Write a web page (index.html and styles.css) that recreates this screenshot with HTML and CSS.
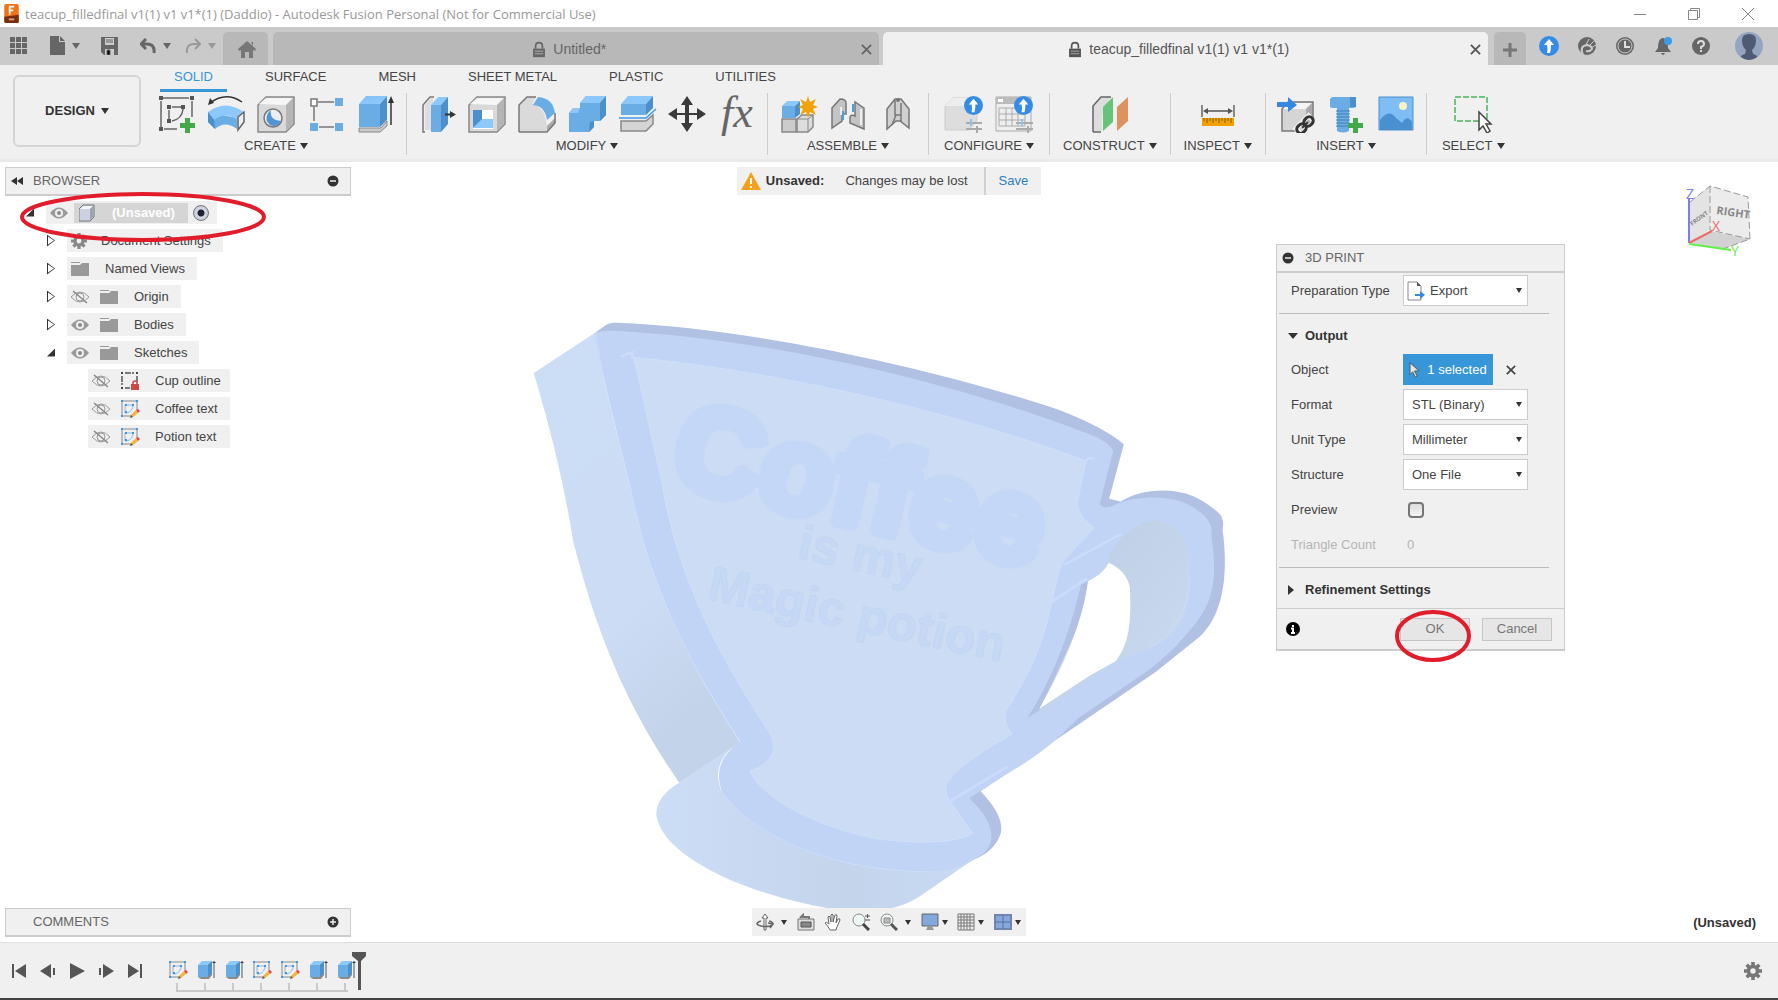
FILE: index.html
```html
<!DOCTYPE html>
<html lang="en">
<head>
    <meta charset="UTF-8">
    <meta name="viewport" content="width=device-width, initial-scale=1.0">
    <title>teacup_filledfinal v1(1) v1 v1*(1) (Daddio) - Autodesk Fusion Personal</title>
    <link rel="stylesheet" href="styles.css">
</head>
<body>
    <!-- Shared icons -->
    <svg class="sprite" width="0" height="0" aria-hidden="true">
        <defs>
            <linearGradient id="blueTop" x1="0" y1="0" x2="1" y2="1">
                <stop offset="0" stop-color="#7fc0f7"/><stop offset="1" stop-color="#93cbfb"/>
            </linearGradient>
            <symbol id="eye" viewBox="0 0 20 16">
                <path d="M1 8Q10-3 19 8Q10 19 1 8Z" fill="#9a9a9a"/>
                <circle cx="10" cy="8" r="4" fill="#efefef"/><circle cx="10" cy="8" r="2" fill="#8a8a8a"/>
            </symbol>
            <symbol id="eye-off" viewBox="0 0 20 16">
                <path d="M1 8Q10-2 19 8Q10 18 1 8Z" fill="none" stroke="#999"/>
                <circle cx="10" cy="8" r="4" fill="none" stroke="#999"/>
                <path d="M3 2l14 12" stroke="#888" stroke-width="1.5"/>
            </symbol>
            <symbol id="folder" viewBox="0 0 20 16">
                <path d="M1 1h9v1h-9zM1 4h9l2-2h7v13H1z" fill="#999"/>
            </symbol>
            <symbol id="gear" viewBox="0 0 20 20">
                <circle cx="10" cy="10" r="5" fill="none" stroke="currentColor" stroke-width="4"/>
                <path d="M10 0v4M10 16v4M0 10h4M16 10h4M3 3l3 3M14 14l3 3M17 3l-3 3M3 17l3-3" stroke="currentColor" stroke-width="4"/>
            </symbol>
            <symbol id="sketch-edit" viewBox="0 0 20 20">
                <path d="M2 2h15v9M2 2v15h9" fill="none" stroke="#aaa" stroke-width="1.5"/>
                <path d="M5 6h8q0 6-6 8h-2z" fill="none" stroke="#8fb6d8"/>
                <path d="M1 1h2v2H1zM16 1h2v2h-2zM1 16h2v2H1zM5 5h2v2H5zM12 5h2v2h-2zM5 12h2v2H5z" fill="#3d97e8"/>
                <path d="M11 16l5-5 2 3-5 4h-2z" fill="#f3b63b"/><path d="M16 11l2-1 2 2-2 2z" fill="#e2464b"/>
                <path d="M10 19l1-3 2 2z" fill="#555"/>
            </symbol>
            <symbol id="sketch-lock" viewBox="0 0 20 20">
                <path d="M5 2h9M2 5v9M17 5v6M5 17h5" stroke="#555" stroke-width="1.5" stroke-dasharray="6 1"/>
                <path d="M1 1h2v2H1zM16 1h2v2h-2zM1 16h2v2H1z" fill="#444"/>
                <path d="M11 13h8v6h-8z" fill="#c9474b"/><path d="M13 13v-2q2-2 4 0v2" fill="none" stroke="#c9474b" stroke-width="1.5"/>
            </symbol>
            <symbol id="extrude-small" viewBox="0 0 20 20">
                <path d="M2 17l3 2h8l3-4V3h-4L2 6z" fill="#8b8b8b"/>
                <path d="M2 5h10v12H2z" fill="#6aade5"/><path d="M2 5l4-4h10l-4 4z" fill="#8cc8fa"/>
                <path d="M12 5l4-4v12l-4 4z" fill="#4b8fcb"/><path d="M18 18V3" stroke="#555"/><path d="M16 3l2-2 2 2z" fill="#333"/>
            </symbol>
            <symbol id="up-badge" viewBox="0 0 20 20">
                <circle cx="10" cy="10" r="10" fill="#348ce6"/>
                <path d="M10 3l5 6h-3q0 5-1 8h-3q1-4 0-8H5z" fill="#fff"/>
            </symbol>
            <symbol id="minus-dot" viewBox="0 0 12 12"><circle cx="6" cy="6" r="5.5" fill="#333"/><path d="M3 6h6" stroke="#eee" stroke-width="1.5"/></symbol>
            <symbol id="plus-dot" viewBox="0 0 12 12"><circle cx="6" cy="6" r="5.5" fill="#333"/><path d="M3 6h6M6 3v6" stroke="#eee" stroke-width="1.5"/></symbol>
            <symbol id="cursor" viewBox="0 0 12 18"><path d="M1 1v13l3-3 3 6 2-1-3-6h5z" fill="#e8e8e8" stroke="#555"/></symbol>
            <symbol id="lock" viewBox="0 0 16 20">
                <path d="M1 9h14v10H1z" fill="currentColor"/><path d="M4 9V6q0-4 4-4t4 4v3" fill="none" stroke="currentColor" stroke-width="2"/>
                <path d="M3 12h10M3 15h10" stroke="#eee" stroke-opacity=".6"/>
            </symbol>
            <symbol id="close" viewBox="0 0 12 12"><path d="M1 1l10 10M11 1L1 11" stroke="currentColor" stroke-width="2"/></symbol>
        </defs>
    </svg>

    <header class="titlebar">
        <svg class="app-logo" viewBox="0 0 16 21">
            <path d="M0 2Q0 0 2 0h12q2 0 2 2v18q0 1-2 1H2q-2 0-2-2z" fill="#f47216"/>
            <path d="M0 14l16-2v8q0 1-2 1H2q-2 0-2-2z" fill="#7a2f0b"/>
            <path d="M6 12V3h5M6 7h4" fill="none" stroke="#fff" stroke-width="2"/>
            <path d="M5 17h6" stroke="#d8a88c" stroke-width="2"/>
        </svg>
        <h1>teacup_filledfinal v1(1) v1 v1*(1) (Daddio) - Autodesk Fusion Personal (Not for Commercial Use)</h1>
        <div class="window-buttons">
            <button aria-label="Minimize"><svg viewBox="0 0 12 12"><path d="M0 6.5h12"/></svg></button>
            <button aria-label="Restore"><svg viewBox="0 0 12 12"><path d="M.5 2.500h9v9h-9zM2.500 2V.5h9v9H10"/></svg></button>
            <button aria-label="Close"><svg viewBox="0 0 12 12"><path d="M0 0l12 12M12 0L0 12"/></svg></button>
        </div>
    </header>

    <nav class="tabbar">
        <div class="quick">
            <button aria-label="Data panel"><svg width="18" height="18" viewBox="0 0 18 18"><path d="M0 0h5v5H0zM6 0h5v5H6zM12 0h5v5h-5zM0 6h5v5H0zM6 6h5v5H6zM12 6h5v5h-5zM0 12h5v5H0zM6 12h5v5H6zM12 12h5v5h-5z" fill="#666"/></svg></button>
            <button class="caret" aria-label="File"><svg width="15" height="20" viewBox="0 0 15 20"><path d="M0 0h9v6h6v13H0zM10 0l5 5h-5z" fill="#666"/></svg></button>
            <button aria-label="Save"><svg width="18" height="18" viewBox="0 0 18 18"><path d="M0 0h17v18H3l-3-3z" fill="#666"/><path d="M4 1h9v7H4zM4 12h9v6H4z" fill="#ccc"/><path d="M5 3h7M5 5h7M6 13h3v5H6z" stroke="#666"/></svg></button>
            <button class="caret" aria-label="Undo"><svg width="16" height="16" viewBox="0 0 16 16"><path d="M6 1L1 6l5 5M1 6h6q8 0 7 9" fill="none" stroke="#666" stroke-width="3"/></svg></button>
            <button class="caret dim" aria-label="Redo"><svg width="16" height="16" viewBox="0 0 16 16"><path d="M10 1l5 5-5 5M15 6H9Q1 6 2 15" fill="none" stroke="#999" stroke-width="2"/></svg></button>
        </div>
        <button class="tab tab-home" aria-label="Home"><svg width="18" height="17" viewBox="0 0 18 17"><path d="M9 0l9 8-1 2-2-1v8h-4v-6H7v6H3V9l-2 1-1-2zM13 1h2v4z" fill="#777"/></svg></button>
        <div class="tab tab-doc">
            <span class="tab-label"><svg width="14" height="17"><use href="#lock"/></svg>Untitled*</span>
            <button aria-label="Close tab"><svg width="11" height="11"><use href="#close"/></svg></button>
        </div>
        <div class="tab tab-doc tab-active">
            <span class="tab-label"><svg width="14" height="17"><use href="#lock"/></svg>teacup_filledfinal v1(1) v1 v1*(1)</span>
            <button aria-label="Close tab"><svg width="11" height="11"><use href="#close"/></svg></button>
        </div>
        <button class="tab tab-add" aria-label="New tab"><svg width="16" height="16" viewBox="0 0 16 16"><path d="M8 1v14M1 8h14" stroke="#777" stroke-width="3"/></svg></button>
        <div class="account">
            <button aria-label="Update"><svg width="20" height="20"><use href="#up-badge"/></svg></button>
            <button aria-label="Extensions"><svg width="20" height="20" viewBox="0 0 20 20"><circle cx="10" cy="10" r="9" fill="#666"/><path d="M6 19q-4-9 4-10 5 1 5 4-2 3-6 2" fill="none" stroke="#ccc" stroke-width="2"/><path d="M9 9l3-6M12 10l5-5M14 12l5-3" stroke="#ccc"/></svg></button>
            <button aria-label="Job status"><svg width="20" height="20" viewBox="0 0 20 20"><circle cx="10" cy="10" r="9" fill="#666"/><circle cx="10" cy="10" r="7" fill="none" stroke="#ccc"/><path d="M10 5v6h5" fill="none" stroke="#ddd" stroke-width="2"/></svg></button>
            <button aria-label="Notifications"><svg width="20" height="20" viewBox="0 0 20 20"><path d="M2 16l3-4q0-10 5-10t5 10l3 4zM8 17h4q-2 4-4 0z" fill="#666"/><circle cx="15" cy="5" r="4" fill="#3a9be8"/></svg></button>
            <button aria-label="Help"><svg width="20" height="20" viewBox="0 0 20 20"><circle cx="10" cy="10" r="9" fill="#666"/><path d="M7 8q0-3 3-3t3 3q0 2-3 3v2M10 14v2" fill="none" stroke="#ddd" stroke-width="2"/></svg></button>
            <button class="avatar" aria-label="Account"><svg width="28" height="28" viewBox="0 0 28 28"><circle cx="14" cy="14" r="14" fill="#94a5c2"/><path d="M7 8q0-6 7-6t7 6q0 7-4 10l1 4q4 1 4 3-4 3-8 3t-8-3q0-2 4-3l1-4Q7 15 7 8z" fill="#4e5b72"/></svg></button>
        </div>
    </nav>

    <section class="ribbon">
        <button class="workspace">DESIGN</button>
        <div class="ribbon-main">
            <div class="ribbon-tabs">
                <button class="selected">SOLID</button>
                <button>SURFACE</button>
                <button>MESH</button>
                <button>SHEET METAL</button>
                <button>PLASTIC</button>
                <button>UTILITIES</button>
            </div>
            <div class="groups">
                <div class="group">
                    <div class="tools">
                        <button aria-label="Create sketch"><svg viewBox="0 0 40 40"><path d="M7 5h26M5 8v26M36 8v16M8 36h13" stroke="#666" stroke-width="1.500" fill="none"/><path d="M3 3h4v4H3zM34 3h4v4h-4zM3 34h4v4H3zM11 12h4v4h-4zM25 12h4v4h-4zM11 26h4v4h-4z" fill="#555"/><path d="M16 14h9M13 17v9M27 16q-1 10-11 12" fill="none" stroke="#666" stroke-width="1.500"/><path d="M29 25h5v5h5v5h-5v5h-5v-5h-5v-5h5z" fill="#43a84a"/></svg></button>
                        <button aria-label="Revolve"><svg viewBox="0 0 40 40"><path d="M4 10Q20-2 36 9" fill="none" stroke="#333" stroke-width="1.500"/><path d="M2 12l2-7 4 5z" fill="#333"/><path d="M2 19v10l7 7q10-9 22 0V25z" fill="#6aade5"/><path d="M2 19q17-13 36 0l-7 8q-11-9-23 0z" fill="#8cc8fa"/><path d="M2 19l6 8 1 9-7-7z" fill="#4b8fcb"/><path d="M32 24l6-5v10l-6 8z" fill="#eee" stroke="#666" stroke-width="1.500"/></svg></button>
                        <button aria-label="Hole"><svg viewBox="0 0 40 40"><path d="M2 12l8-8h28v27l-8 8H2z" fill="#d9d9d9" stroke="#888" stroke-width="1.500"/><path d="M3 11l7-6h27l-7 7z" fill="#f5f5f5"/><path d="M30 12l7-7v26l-7 7z" fill="#b5b5b5"/><circle cx="17" cy="25" r="9" fill="#eee" stroke="#777" stroke-width="1.500"/><path d="M15 17q-2 10 10 11-4 7-11 4-6-5-2-12z" fill="#4f94d4"/></svg></button>
                        <button aria-label="Pattern"><svg viewBox="0 0 40 40"><path d="M12 9h16M8 14v14M13 34h15" stroke="#777" stroke-width="1.500"/><path d="M5 6h6v7H5z" fill="#fff" stroke="#777" stroke-width="1.500"/><path d="M29 5h8v8h-8zM4 30h8v8H4zM29 30h8v8h-8z" fill="#6aade5"/></svg></button>
                        <button aria-label="Extrude"><svg viewBox="0 0 40 40"><path d="M3 35h22l6-7v5l-7 6H3z" fill="#ccc" stroke="#888"/><path d="M3 11h21v23H3z" fill="#6aade5"/><path d="M3 11l7-8h21l-7 8z" fill="url(#blueTop)"/><path d="M24 11l7-8v24l-7 7z" fill="#4b8fcb"/><path d="M35 32V8" stroke="#333" stroke-width="1.500"/><path d="M32 10l3-7 3 7z" fill="#333"/></svg></button>
                    </div>
                    <span class="group-label">CREATE</span>
                </div>
                <div class="group">
                    <div class="tools">
                        <button aria-label="Press pull"><svg viewBox="0 0 40 40"><path d="M8 39H6V12l7-8h4" fill="none" stroke="#777" stroke-width="1.500"/><path d="M8 12l6-7h2v32H8z" fill="#ddd"/><path d="M14 12h10v27H14z" fill="#6aade5"/><path d="M14 12l7-8h10l-7 8z" fill="#8cc8fa"/><path d="M24 12l7-8v27l-7 8z" fill="#4b8fcb"/><path d="M28 21.500h7" stroke="#333" stroke-width="2"/><path d="M33 18l6 3.500-6 3.500z" fill="#333"/></svg></button>
                        <button aria-label="Shell"><svg viewBox="0 0 40 40"><path d="M2 12l8-8h28v27l-8 8H2z" fill="#d9d9d9" stroke="#888" stroke-width="1.500"/><path d="M3 11l7-6h27l-7 7z" fill="#f5f5f5"/><path d="M30 12l7-7v26l-7 7z" fill="#b5b5b5"/><path d="M6 17h20v19H6z" fill="#fff"/><path d="M6 17h9v10l-9 8z" fill="#4b8fcb"/><path d="M6 35l9-9h11v9z" fill="#8cc8fa"/></svg></button>
                        <button aria-label="Fillet"><svg viewBox="0 0 40 40"><path d="M2 39V12l8-8h9l-4 7q15 3 15 28z" fill="#dadada"/><path d="M30 33l8-8v5l-8 9z" fill="#aaa"/><path d="M2 39V12l8-8h9M2 39h28l8-9v-10" fill="none" stroke="#777" stroke-width="1.500"/><path d="M16 12l5-8q15 1 17 16l-8 7q-2-14-14-15z" fill="#6aade5"/></svg></button>
                        <button aria-label="Combine"><svg viewBox="0 0 40 40"><path d="M2 20l4-5h7V10l6-7h20v19l-6 6h-6v6l-5 5H2z" fill="#6aade5"/><path d="M2 20l4-5h7l-2 5zM13 10l6-7h20l-6 7z" fill="#8cc8fa"/><path d="M33 10l6-7v19l-6 6zM23 29l4-1v6l-5 5z" fill="#4b8fcb"/></svg></button>
                        <button aria-label="Split body"><svg viewBox="0 0 40 40"><path d="M4 11h25v11H4z" fill="#6aade5"/><path d="M4 11l7-8h25l-7 8z" fill="#8cc8fa"/><path d="M29 11l7-8v12l-7 7z" fill="#4b8fcb"/><path d="M2 25h27l10-9" fill="none" stroke="#3d97e8" stroke-width="1.500"/><path d="M4 28h25l7-6v9l-7 7H4z" fill="#d5d5d5" stroke="#888" stroke-width="1.500"/></svg></button>
                        <button aria-label="Move"><svg viewBox="0 0 40 40"><path d="M20 3l6 9h-4v8h8v-5l9 6-9 6v-5h-8v8h4l-6 9-6-9h4v-8h-8v5l-9-6 9-6v5h8v-8h-4z" fill="#3a3a3a"/></svg></button>
                        <button class="fx">fx</button>
                    </div>
                    <span class="group-label">MODIFY</span>
                </div>
                <div class="group">
                    <div class="tools">
                        <button aria-label="New component"><svg viewBox="0 0 40 40"><path d="M4 26h14v13H4z" fill="#ccc" stroke="#888" stroke-width="1.500"/><path d="M19 26l5-4h11v12l-5 5H19z" fill="#ddd" stroke="#888" stroke-width="1.500"/><path d="M19 26h11v13M30 26l5-4" fill="none" stroke="#888"/><path d="M4 13h13v12H4z" fill="#6aade5"/><path d="M4 13l5-5h13l-5 5z" fill="#8cc8fa"/><path d="M17 13l5-5v13l-5 4z" fill="#4b8fcb"/><path d="M30 3l2 6 6-3-3 6 5 2-5 2 3 6-6-3-2 6-2-6-6 3 3-6-5-2 5-2-3-6 6 3z" fill="#f0a30a"/></svg></button>
                        <button aria-label="Joint"><svg viewBox="0 0 40 40"><path d="M4 15l8-9q6 0 6 4v11h-4v7L4 35zM36 15l-9-6v14q-4-2-5 1v6l14 6z" fill="#c4c4c4" stroke="#777" stroke-width="1.500"/><path d="M15 18v9M25 11v8" stroke="#4a9fe8" stroke-width="2"/><path d="M13 14v8M33 16v16" stroke="#eee" stroke-width="2"/></svg></button>
                        <button aria-label="As-built joint"><svg viewBox="0 0 40 40"><path d="M9 16l8-10h6l8 10v19l-9-7h-4l-9 8z" fill="#d0d0d0" stroke="#777" stroke-width="1.500"/><path d="M17 7v15h6V10M18 22l-4 10M23 21v8" fill="none" stroke="#777" stroke-width="1.500"/><circle cx="20" cy="7" r="2" fill="#777"/></svg></button>
                    </div>
                    <span class="group-label">ASSEMBLE</span>
                </div>
                <div class="group group-wide">
                    <div class="tools">
                        <button aria-label="Configure model"><svg viewBox="0 0 40 40"><path d="M1 13l8-8h24v22l-8 10H1z" fill="#ddd" stroke="#ccc"/><path d="M1 13l8-8h24l-8 8z" fill="#eee"/><path d="M22 30h16M22 36h16" stroke="#aaa" stroke-width="2"/><path d="M27 26v7" stroke="#8ec5ee" stroke-width="2"/><path d="M33 33v7" stroke="#aaa" stroke-width="2"/><use href="#up-badge" x="20" y="3" width="19" height="19"/></svg></button>
                        <button aria-label="Configuration table"><svg viewBox="0 0 40 40"><path d="M2 4h35v34H2z" fill="#eee" stroke="#aaa"/><path d="M2 4h35v7H2z" fill="#bbb"/><path d="M4 6h5v3H4z" fill="#fff"/><path d="M5 15h26v18H5zM5 21h26M5 27h26M12 15v18M18 15v18M24 15v18" fill="none" stroke="#aaa"/><path d="M22 30h17M22 36h17" stroke="#aaa" stroke-width="2"/><path d="M28 26v7" stroke="#8ec5ee" stroke-width="2"/><path d="M34 33v7" stroke="#aaa" stroke-width="2"/><use href="#up-badge" x="20" y="3" width="19" height="19"/></svg></button>
                    </div>
                    <span class="group-label">CONFIGURE</span>
                </div>
                <div class="group group-slim">
                    <div class="tools">
                        <button aria-label="Offset plane"><svg viewBox="0 0 40 40"><path d="M3 39V13l8-9h10" fill="#ddd" stroke="#666" stroke-width="1.500"/><path d="M4 14l8-9h8l-8 9v24H4z" fill="#ddd"/><path d="M3 39h8" stroke="#666" stroke-width="1.500"/><path d="M13 14l10-10v25L13 38z" fill="#66c47a"/><path d="M27 14L38 4v24L27 38z" fill="#de935f"/></svg></button>
                    </div>
                    <span class="group-label">CONSTRUCT</span>
                </div>
                <div class="group group-slim">
                    <div class="tools">
                        <button aria-label="Measure"><svg viewBox="0 0 40 40"><path d="M4 12v12M36 12v12" stroke="#666" stroke-width="1.500"/><path d="M8 18h24" stroke="#555" stroke-width="1.500"/><path d="M5 18l5-3v6zM35 18l-5-3v6z" fill="#555"/><path d="M4 25h32v8H4z" fill="#f2a100"/><path d="M6 25v3M9 25v5M12 25v3M15 25v5M18 25v3M21 25v5M24 25v3M27 25v5M30 25v3M33 25v5" stroke="#8a5a00"/></svg></button>
                    </div>
                    <span class="group-label">INSPECT</span>
                </div>
                <div class="group">
                    <div class="tools">
                        <button aria-label="Insert derive"><svg viewBox="0 0 40 40"><path d="M6 16l6-7h25v21l-7 8H6z" fill="#d5d5d5" stroke="#777" stroke-width="1.500"/><path d="M7 16l6-6h23l-6 6z" fill="#f4f4f4"/><path d="M30 16l6-6v20l-6 7z" fill="#aaa"/><path d="M1 9h11V4l9 8-9 7v-5H1z" fill="#3589e0"/><g transform="rotate(-45 29 32)" fill="none"><path d="M20 28h9v8h-9zM29 28h9v8h-9z" stroke="#f0f0f0" stroke-width="5"/><rect x="19" y="28" width="10" height="8" rx="4" stroke="#333" stroke-width="3"/><rect x="29" y="28" width="10" height="8" rx="4" stroke="#333" stroke-width="3"/><path d="M25 32h8" stroke="#333" stroke-width="2"/></g></svg></button>
                        <button aria-label="Insert fastener"><svg viewBox="0 0 40 40"><path d="M4 6l2-2h22l2 2v8l-2 1H6l-2-1z" fill="#6aade5"/><path d="M24 4h6v10h-6z" fill="#4b8fcb"/><path d="M11 15h12v23q-6 3-12 0z" fill="#6aade5"/><path d="M10 18h14M10 21h14M10 24h14M10 27h14M10 30h14M10 33h14" stroke="#3f7fb8"/><path d="M27 25h5v5h5v5h-5v5h-5v-5h-5v-5h5z" fill="#43a84a"/></svg></button>
                        <button aria-label="Insert image"><svg viewBox="0 0 40 40"><path d="M3 4h34v33H3z" fill="#7ebef5" stroke="#4b8fcb"/><path d="M4 27q9-12 16-2l6 5q5-9 10-1v8H4z" fill="#4a8fd0"/><circle cx="27" cy="13" r="4" fill="#fbf3c0"/></svg></button>
                    </div>
                    <span class="group-label">INSERT</span>
                </div>
                <div class="group group-wide">
                    <div class="tools">
                        <button aria-label="Select"><svg viewBox="0 0 40 40"><path d="M2 4h32v24H2z" fill="none" stroke="#4bb25a" stroke-width="1.500" stroke-dasharray="6 2"/><path d="M26 19v18l4-4 4 7 3-2-4-7h5z" fill="#fff" stroke="#444" stroke-width="1.500"/></svg></button>
                    </div>
                    <span class="group-label">SELECT</span>
                </div>
            </div>
        </div>
    </section>

    <main class="viewport">
        <!-- Model on the canvas -->
        <svg class="model" width="720" height="610" viewBox="0 0 720 610" role="img" aria-label="Teacup body">
            <defs>
                <linearGradient id="side" x1="0" y1="0" x2=".4" y2="1">
                    <stop offset="0" stop-color="#ccddf6"/><stop offset=".7" stop-color="#cbdcf4"/><stop offset="1" stop-color="#c2d3ea"/>
                </linearGradient>
                <linearGradient id="foot" x1="0" y1="0" x2="1" y2="0">
                    <stop offset="0" stop-color="#ccddf6"/><stop offset=".6" stop-color="#c4d4eb"/><stop offset="1" stop-color="#c8daf5"/>
                </linearGradient>
                <linearGradient id="wall" x1="0" y1="0" x2="1" y2="1">
                    <stop offset="0" stop-color="#bccce2"/><stop offset="1" stop-color="#cbdcf3"/>
                </linearGradient>
            </defs>
            <g transform="scale(.4592 .389)">
                <path fill="#b0c1e3" d="M165 57L188 38C194 34 200 33 210 33C500 45 900 150 1170 255Q1270 300 1315 345L1283 485L1308 492C1350 460 1420 455 1465 478Q1490 490 1520 520Q1535 535 1530 565C1542 670 1535 780 1480 840L1385 930L1003 1237Q1055 1300 1047 1345Q1035 1390 990 1412L700 1300L260 500Z"/>
                <path fill="url(#side)" d="M30 162L165 57C185 220 215 330 245 480C285 720 380 930 480 1112L347 1215C220 1000 160 800 115 590Q90 400 30 162Z"/>
                <path fill="url(#foot)" d="M347 1215L480 1110C425 1150 425 1200 440 1240C500 1340 660 1440 880 1444Q940 1442 1000 1402L870 1508Q840 1532 800 1540H680C480 1500 310 1400 297 1300Q295 1250 347 1215Z"/>
                <path fill="#c1d4f5" d="M162 60Q180 52 215 54C600 80 1000 210 1230 315Q1280 335 1292 362L1262 500Q1275 515 1300 498C1350 475 1430 475 1470 510Q1512 540 1506 585C1520 700 1510 760 1450 835Q1420 880 1370 925L1215 1050C1180 1090 1150 1130 1075 1182L978 1255C1030 1310 1045 1370 1000 1405Q950 1445 880 1444C650 1440 500 1340 440 1240Q415 1160 480 1110C380 930 285 720 245 480C215 330 185 200 162 60Z"/>
                <path fill="#cbdcf4" stroke="#d1e0fa" stroke-width="2" d="M248 122C500 150 900 240 1232 388L1213 500Q1220 535 1250 560L1180 650C1150 750 1160 850 1058 1030Q1052 1065 1072 1090L1015 1130C940 1190 915 1220 933 1255L985 1345C950 1373 860 1372 780 1360C650 1330 530 1260 500 1185C550 1165 560 1130 545 1090C440 900 345 700 310 450Z"/>
                <path fill="#b0c1e3" d="M1237 697C1225 820 1175 930 1130 1030L1105 1048C1160 950 1200 820 1222 705Z"/>
                <path fill="url(#wall)" d="M1280 645C1295 590 1350 535 1390 542C1440 550 1465 600 1458 690C1462 780 1430 840 1370 870L1290 905L1190 990L1130 1038L1135 1020Z"/>
                <path fill="#fff" d="M1282 650Q1320 670 1328 712C1332 810 1325 860 1297 903L1240 940L1131 1025C1190 900 1225 800 1237 697Q1270 680 1282 650Z"/>
                <path fill="none" stroke="#cbdcfb" stroke-width="6" d="M1185 655L1310 575M1100 795L1235 690M905 1285L1060 1175M220 120L245 108V125M1232 388Q1240 375 1250 385"/>
                <path fill="none" stroke="#cdddf8" stroke-width="2" d="M165 57C185 220 215 330 245 480C285 720 380 930 480 1112M440 1240C500 1340 660 1440 880 1444M1458 690C1455 780 1420 830 1370 870"/>
            </g>
            <g class="engraving">
                <text class="engrave-big" transform="translate(148 173) rotate(13)">Coffee</text>
                <text class="engrave-small" transform="translate(276 248) rotate(12)">is my</text>
                <text class="engrave-small" transform="translate(186 289) rotate(12)">Magic potion</text>
            </g>
        </svg>

        <aside class="browser">
            <div class="panel-bar">
                <svg class="collapse" width="12" height="8" viewBox="0 0 12 8"><path d="M6 0v8L0 4zM12 0v8L6 4z" fill="#333"/></svg>
                <h2>BROWSER</h2>
                <button aria-label="Collapse browser"><svg width="12" height="12"><use href="#minus-dot"/></svg></button>
            </div>
            <ul class="tree">
                <li class="root"><span class="twist open"></span><div class="node">
                    <svg width="20" height="16"><use href="#eye"/></svg>
                    <span class="root-name"><svg width="16" height="18" viewBox="0 0 16 18"><path d="M0 5l4-4h11v12l-4 4H0z" fill="#ccd2df" stroke="#777"/><path d="M1 5l4-3h9l-3 3z" fill="#f4f6fa"/><path d="M11 5l3-3v11l-3 3z" fill="#9aa3b5"/></svg><b>(Unsaved)</b></span>
                    <input type="radio" name="active" aria-label="Activate component" checked>
                </div></li>
                <li><span class="twist"></span><div class="node node-settings"><svg class="gray" width="16" height="16"><use href="#gear"/></svg><span>Document Settings</span></div></li>
                <li><span class="twist"></span><div class="node"><svg width="20" height="16"><use href="#folder"/></svg><span>Named Views</span></div></li>
                <li><span class="twist"></span><div class="node"><svg width="20" height="16"><use href="#eye-off"/></svg><svg width="20" height="16"><use href="#folder"/></svg><span>Origin</span></div></li>
                <li><span class="twist"></span><div class="node"><svg width="20" height="16"><use href="#eye"/></svg><svg width="20" height="16"><use href="#folder"/></svg><span>Bodies</span></div></li>
                <li><span class="twist open"></span><div class="node"><svg width="20" height="16"><use href="#eye"/></svg><svg width="20" height="16"><use href="#folder"/></svg><span>Sketches</span></div></li>
                <li class="leaf"><div class="node"><svg width="20" height="16"><use href="#eye-off"/></svg><svg width="20" height="20"><use href="#sketch-lock"/></svg><span>Cup outline</span></div></li>
                <li class="leaf"><div class="node"><svg width="20" height="16"><use href="#eye-off"/></svg><svg width="20" height="20"><use href="#sketch-edit"/></svg><span>Coffee text</span></div></li>
                <li class="leaf"><div class="node"><svg width="20" height="16"><use href="#eye-off"/></svg><svg width="20" height="20"><use href="#sketch-edit"/></svg><span>Potion text</span></div></li>
            </ul>
            <svg class="mark mark-root" width="246" height="50" viewBox="0 0 246 50"><ellipse cx="123" cy="25" rx="121" ry="23"/></svg>
        </aside>

        <div class="notice">
            <svg width="20" height="18" viewBox="0 0 20 18"><path d="M10 0l10 18H0z" fill="#f5a11c"/><path d="M10 6v6M10 14v2" stroke="#fff" stroke-width="2"/></svg>
            <strong>Unsaved:</strong>
            <span>Changes may be lost</span>
            <a href="#">Save</a>
        </div>

        <div class="right-side">
            <form class="dialog">
                <div class="dialog-head"><svg width="12" height="12"><use href="#minus-dot"/></svg><h2>3D PRINT</h2></div>
                <div class="fields fields-top">
                    <label for="prep">Preparation Type</label>
                    <div class="drop drop-icon">
                        <svg width="18" height="20" viewBox="0 0 18 20"><path d="M1 1h9l4 4v14H1z" fill="#fff" stroke="#888"/><path d="M10 1v4h4z" fill="#555"/><path d="M8 13h5v-3l5 4-5 4v-3H8z" fill="#3589e0"/></svg>
                        <select id="prep"><option>Export</option></select>
                    </div>
                </div>
                <h3 class="open">Output</h3>
                <div class="fields">
                    <label for="object">Object</label>
                    <div class="picked"><button type="button" id="object"><svg width="11" height="16"><use href="#cursor"/></svg>1 selected</button><button type="button" class="clear" aria-label="Clear selection"><svg width="10" height="10"><use href="#close"/></svg></button></div>
                    <label for="format">Format</label>
                    <div class="drop"><select id="format"><option>STL (Binary)</option></select></div>
                    <label for="unit">Unit Type</label>
                    <div class="drop"><select id="unit"><option>Millimeter</option></select></div>
                    <label for="structure">Structure</label>
                    <div class="drop"><select id="structure"><option>One File</option></select></div>
                    <label for="preview">Preview</label>
                    <input type="checkbox" id="preview">
                    <span class="muted">Triangle Count</span>
                    <output class="muted">0</output>
                </div>
                <h3 class="refine">Refinement Settings</h3>
                <div class="dialog-foot">
                    <svg width="14" height="14" viewBox="0 0 14 14"><circle cx="7" cy="7" r="7" fill="#000"/><path d="M7 3v2M5 6.500h2v4M5 11h4" fill="none" stroke="#fff" stroke-width="2"/></svg>
                    <button type="button">OK</button>
                    <button type="button">Cancel</button>
                    <svg class="mark mark-ok" width="76" height="52" viewBox="0 0 76 52"><ellipse cx="38" cy="26" rx="36" ry="24"/></svg>
                </div>
            </form>
            <svg class="viewcube" width="80" height="80" viewBox="0 0 80 80">
                <path d="M12 20L32 4V48L11 61z" fill="#e3e3e3"/><path d="M32 4L70 15L72 57L32 49z" fill="#ececec"/><path d="M11 61L32 49L72 57L45 67z" fill="#d2d2d2"/>
                <path d="M12 20L32 4L70 15L72 57L45 67M32 4V48L72 57" fill="none" stroke="#999" stroke-dasharray="7 3"/>
                <text class="cube-side" transform="translate(38 32) rotate(8)">RIGHT</text>
                <text class="cube-front" transform="translate(14 44) rotate(-36)">FRONT</text>
                <path d="M11 61V17" stroke="#7d7df0" stroke-width="2"/><path d="M11 61L34 49" stroke="#ee6b6b" stroke-width="2"/><path d="M11 62L53 68" stroke="#5ff04a" stroke-width="2"/>
                <text class="axis" x="8" y="17" fill="#7d7df0">Z</text><text class="axis" x="34" y="49" fill="#ee6b6b">X</text><text class="axis" x="53" y="74" fill="#5ff04a">Y</text>
            </svg>
        </div>

        <div class="panel-bar comments">
            <h2>COMMENTS</h2>
            <button aria-label="Expand comments"><svg width="12" height="12"><use href="#plus-dot"/></svg></button>
        </div>

        <div class="navbar">
            <button class="caret spaced" aria-label="Orbit"><svg width="18" height="18" viewBox="0 0 18 18"><path d="M9 1l3 4h-2v12H8V5H6z" fill="#fff" stroke="#666"/><path d="M5 8q-8 3 0 5 5 1 9 0 6-3-1-5M12 10l5 1-3 4" fill="none" stroke="#666" stroke-width="1.500"/></svg></button>
            <button aria-label="Look at"><svg width="18" height="18" viewBox="0 0 18 18"><path d="M1 6h16v11H1z" fill="#ddd" stroke="#777"/><path d="M4 9h10v5H4z" fill="#888" stroke="#555"/><path d="M3 5l3-3v2h6v2" fill="none" stroke="#777" stroke-width="2"/></svg></button>
            <button aria-label="Pan"><svg width="18" height="18" viewBox="0 0 18 18"><path d="M6 17Q4 13 1 10q1-2 4 1L4 4q1-2 2 0l1 5V2q1-2 2 0v7l2-7q2-1 2 1l-1 7 2-4q2-1 2 1l-3 7-1 3z" fill="#fff" stroke="#666"/></svg></button>
            <button aria-label="Zoom"><svg width="18" height="18" viewBox="0 0 18 18"><circle cx="7" cy="7" r="6" fill="#eef6f6" stroke="#888"/><path d="M11 11l6 6" stroke="#444" stroke-width="3"/><path d="M13 3h5M15.500 1v4M13 7h5" stroke="#555"/></svg></button>
            <button class="caret spaced" aria-label="Fit"><svg width="18" height="18" viewBox="0 0 18 18"><circle cx="7" cy="7" r="6" fill="#eef6f6" stroke="#888"/><path d="M4 5h6v5H4z" fill="#bbb" stroke="#888"/><path d="M11 11l6 6" stroke="#555" stroke-width="3"/></svg></button>
            <button class="caret" aria-label="Display settings"><svg width="18" height="18" viewBox="0 0 18 18"><path d="M1 1h16v12H1z" fill="#85a7dc" stroke="#666"/><path d="M7 13h4l2 4H5z" fill="#999"/></svg></button>
            <button class="caret" aria-label="Grid"><svg width="18" height="18" viewBox="0 0 18 18"><path d="M1 1h16v16H1zM1 4h16M1 7h16M1 10h16M1 13h16M4 1v16M7 1v16M10 1v16M13 1v16" fill="#eee" stroke="#777"/></svg></button>
            <button class="caret" aria-label="Viewports"><svg width="18" height="18" viewBox="0 0 18 18"><path d="M1 2h16v14H1z" fill="#85a7dc" stroke="#6f87b0" stroke-width="2"/><path d="M9 2v14M1 9h16" stroke="#57719c"/></svg></button>
        </div>

        <strong class="doc-state">(Unsaved)</strong>
    </main>

    <footer class="timeline">
        <div class="playback">
            <button aria-label="Go to start"><svg viewBox="0 0 16 16"><path d="M1 1h2v14H1zM15 1v14L4 8z"/></svg></button>
            <button aria-label="Step back"><svg viewBox="0 0 16 16"><path d="M11 1v14L0 8zM13 5h2v7h-2z"/></svg></button>
            <button aria-label="Play"><svg viewBox="0 0 16 16"><path d="M1 0l15 8-15 8z"/></svg></button>
            <button aria-label="Step forward"><svg viewBox="0 0 16 16"><path d="M5 1v14l11-7zM1 5h2v7H1z"/></svg></button>
            <button aria-label="Go to end"><svg viewBox="0 0 16 16"><path d="M13 1h2v14h-2zM1 1v14l11-7z"/></svg></button>
        </div>
        <div class="features">
            <button aria-label="Sketch 1"><svg><use href="#sketch-edit"/></svg></button>
            <button aria-label="Extrude 1"><svg><use href="#extrude-small"/></svg></button>
            <button aria-label="Extrude 2"><svg><use href="#extrude-small"/></svg></button>
            <button aria-label="Sketch 2"><svg><use href="#sketch-edit"/></svg></button>
            <button aria-label="Sketch 3"><svg><use href="#sketch-edit"/></svg></button>
            <button aria-label="Extrude 3"><svg><use href="#extrude-small"/></svg></button>
            <button aria-label="Extrude 4"><svg><use href="#extrude-small"/></svg></button>
        </div>
        <svg class="playhead" width="14" height="38" viewBox="0 0 14 38"><path d="M0 0h14v4L9 9v29H6V9L0 4z" fill="#555"/></svg>
        <button class="settings" aria-label="Settings"><svg width="18" height="18"><use href="#gear"/></svg></button>
    </footer>
</body>
</html>
```
FILE: styles.css
```css
* {
    box-sizing: border-box;
}
body {
    display: flex;
    flex-direction: column;
    min-height: 100vh;
    margin: 0;
    background: #fff;
    color: #444;
    font: 13px/16px "Liberation Sans", Arial, sans-serif;
}
button {
    display: flex;
    align-items: center;
    justify-content: center;
    padding: 0;
    border: 0;
    background: none;
    color: inherit;
    font: inherit;
}
svg {
    display: block;
    flex: none;
}
h1, h2, h3 {
    margin: 0;
    font-size: 13px;
    font-weight: normal;
}
.sprite {
    position: absolute;
}

/* Small drop-down arrow after a button or label */
.caret::after, .workspace::after, .group-label::after {
    content: "";
    margin-left: 5px;
    border: 4px solid transparent;
    border-top: 6px solid #333;
    border-bottom: 0;
}

/* Title bar */
.titlebar {
    display: flex;
    align-items: center;
    height: 27px;
    padding: 0 3px 0 4px;
}
.app-logo {
    width: 15px;
    height: 19px;
}
.titlebar h1 {
    flex: 1;
    margin-left: 6px;
    color: #999;
    font: 13px/20px "Open Sans", sans-serif;
}
.window-buttons {
    display: flex;
}
.window-buttons button {
    width: 54px;
    height: 27px;
}
.window-buttons svg {
    width: 12px;
    height: 12px;
    fill: none;
    stroke: #888;
}

/* Document tabs */
.tabbar {
    display: flex;
    align-items: flex-end;
    height: 38px;
    background: #cacaca;
    color: #666;
    font-size: 14px;
}
.quick {
    display: flex;
    align-items: center;
    width: 223px;
    height: 38px;
    padding-left: 10px;
    gap: 14px;
}
.quick .caret::after {
    margin-left: 7px;
    border-top-color: #666;
}
.quick .dim::after {
    border-top-color: #999;
}
.quick button:nth-child(2) {
    margin-left: 8px;
}
.quick button:nth-child(3) {
    margin: 0 7px;
}
.tab {
    height: 33px;
    padding-top: 2px;
    border-radius: 5px 5px 0 0;
    background: #b8b8b8;
}
.tab-home {
    width: 45px;
    margin-right: 5px;
    padding-left: 3px;
}
.tab-doc {
    display: flex;
    flex: 1;
    align-items: center;
    margin-right: 4px;
    padding-right: 7px;
}
.tab-label {
    display: flex;
    flex: 1;
    justify-content: center;
    margin-left: 5px;
    gap: 7px;
}
.tab-active {
    margin-right: 6px;
    background: #f0f0f0;
    color: #555;
}
.tab-add {
    width: 32px;
}
.account {
    display: flex;
    align-items: center;
    height: 38px;
    margin: 0 15px 0 13px;
    gap: 18px;
}
.avatar {
    margin-left: 6px;
}

/* Ribbon */
.ribbon {
    display: flex;
    height: 97px;
    padding-left: 13px;
    border-bottom: 3px solid #e9e9e9;
    background: #f0f0f0;
}
.workspace {
    width: 128px;
    height: 72px;
    margin-top: 10px;
    border: 2px solid #d5d5d5;
    border-radius: 6px;
    color: #333;
    font-weight: bold;
}
.workspace::after {
    margin-left: 6px;
}
.ribbon-main {
    flex: 1;
    margin-left: 5px;
}
.ribbon-tabs {
    display: flex;
    margin-left: 14px;
    gap: 24px;
}
.ribbon-tabs button {
    height: 27px;
    padding: 0 14px;
    border-bottom: 3px solid transparent;
}
.ribbon-tabs .selected {
    border-color: #3696d8;
    color: #3696d8;
}
.groups {
    display: flex;
    margin-top: 1px;
}
.group {
    display: flex;
    flex-direction: column;
    align-items: center;
    padding: 0 10px;
    border-right: 1px solid #ccc;
}
.group:last-child {
    border: 0;
}
.group-wide {
    padding: 0 15px;
}
.group-slim {
    padding: 0 13px;
}
.tools {
    display: flex;
    gap: 10px;
}
.tools button, .tools svg {
    width: 40px;
    height: 40px;
}
.tools .fx {
    color: #666;
    font: italic 44px/36px "Liberation Serif", serif;
}
.group-label {
    display: flex;
    align-items: center;
    height: 19px;
    margin-top: 3px;
}
.group-label::after {
    margin-left: 4px;
}

/* Canvas with its floating panels */
.viewport {
    position: relative;
    display: grid;
    flex: 1;
    grid-template-columns: 1fr auto 1fr;
    grid-template-rows: 1fr auto;
    padding: 5px;
}
.viewport > * {
    z-index: 1;
}
.viewport > .model {
    position: absolute;
    z-index: 0;
    top: 148px;
    left: calc(50% - 369px);
}
.engraving {
    fill: #c5d8f6;
    stroke: #c3d5f0;
    font-family: "Liberation Sans", Arial, sans-serif;
    font-weight: bold;
}
.engrave-big {
    fill: #c5d7f7;
    stroke: #c5d7f7;
    stroke-width: 12px;
    stroke-linejoin: round;
    font-size: 121px;
}
.engrave-small {
    font-size: 49px;
}
.browser {
    position: relative;
    width: 346px;
}
.panel-bar {
    display: flex;
    align-items: center;
    width: 346px;
    height: 29px;
    padding: 0 11px 0 5px;
    border: 1px solid #ccc;
    border-bottom-width: 2px;
    background: #f0f0f0;
    color: #666;
}
.panel-bar h2 {
    flex: 1;
    margin-left: 10px;
}
.comments h2 {
    margin-left: 22px;
}
.tree {
    margin: 5px 0 0;
    padding: 0;
    list-style: none;
}
.tree li {
    display: flex;
    align-items: center;
    height: 23px;
    margin: 0 0 5px 42px;
    white-space: nowrap;
}
.tree .root {
    margin-left: 21px;
}
.tree .leaf {
    margin-left: 83px;
}
.twist {
    width: 20px;
}
.twist::before {
    content: "";
    display: block;
    width: 8px;
    height: 12px;
    background: #333;
    clip-path: polygon(0 0, 100% 50%, 0 100%, 0 0, 1px 2px, 1px 10px, 7px 6px, 1px 2px);
}
.open.twist::before {
    height: 8px;
    clip-path: polygon(100% 0, 100% 100%, 0 100%);
}
.node {
    display: flex;
    align-items: center;
    height: 23px;
    padding: 0 12px 0 3px;
    gap: 9px;
    background: #f0f0f0;
}
.node span {
    margin-left: 6px;
}
.node-settings span {
    margin-left: 4px;
}
.leaf .node {
    width: 142px;
}
.gray {
    margin: 0 1px;
    color: #888;
}
.root .node {
    padding-right: 8px;
    gap: 5px;
}
.node .root-name {
    display: flex;
    align-items: center;
    height: 20px;
    margin-left: 0;
    padding: 0 13px 0 5px;
    gap: 17px;
    background: #d5d5d5;
    color: #fff;
}
.node input {
    appearance: none;
    width: 16px;
    height: 16px;
    margin: 0;
    border: 1px solid #777;
    border-radius: 50%;
    background: radial-gradient(circle, #223 3px, #d9dde6 4px, #b9c0ce 8px);
}
.mark {
    position: absolute;
    fill: none;
    stroke: #e11d2b;
    stroke-width: 4px;
}
.mark-root {
    top: 25px;
    left: 15px;
}
.notice {
    display: flex;
    align-items: center;
    height: 28px;
    padding-left: 4px;
    background: #f0f0f0;
}
.notice strong {
    margin: 0 21px 0 5px;
    color: #333;
}
.notice a {
    margin-left: 16px;
    padding: 6px 13px;
    border-left: 2px solid #d0d0d0;
    color: #2e7cc4;
    text-decoration: none;
}
.right-side {
    display: flex;
    align-items: flex-start;
    justify-content: flex-end;
}
.viewcube {
    margin: 15px 15px 0 113px;
}
.cube-side, .cube-front {
    fill: #888;
    font: bold 11px "Open Sans", sans-serif;
}
.cube-front {
    font-size: 6px;
}
.axis {
    font: 14px "Open Sans", sans-serif;
}

/* 3D print dialog */
.dialog {
    width: 289px;
    margin-top: 77px;
    border: 1px solid #ccc;
    border-bottom-width: 2px;
    background: #f0f0f0;
}
.dialog-head {
    display: flex;
    align-items: center;
    height: 28px;
    padding-left: 5px;
    gap: 11px;
    border-bottom: 2px solid #ccc;
    color: #666;
}
.fields {
    display: grid;
    grid-template-columns: 112px 125px;
    grid-auto-rows: 31px;
    align-items: center;
    margin: 0 15px 0 2px;
    padding: 0 0 7px 12px;
    row-gap: 4px;
    border-bottom: 1px solid #bbb;
}
.fields-top {
    padding-top: 2px;
}
.drop {
    position: relative;
}
.drop select {
    appearance: none;
    width: 125px;
    height: 31px;
    padding: 0 8px;
    border: 1px solid #ccc;
    border-radius: 0;
    background: #fff;
    color: #444;
    font: inherit;
}
.drop::after {
    content: "";
    position: absolute;
    top: 13px;
    right: 6px;
    border: 3px solid transparent;
    border-top: 5px solid #333;
    border-bottom: 0;
}
.drop-icon svg {
    position: absolute;
    top: 6px;
    left: 4px;
}
.drop-icon select {
    padding-left: 26px;
}
.picked {
    display: flex;
    gap: 13px;
}
.picked button:first-child {
    width: 90px;
    height: 31px;
    gap: 7px;
    background: #3696d8;
    color: #fff;
}
.fields input {
    appearance: none;
    width: 16px;
    height: 16px;
    margin: 0 5px;
    border: 2px solid #777;
    border-radius: 4px;
    background: linear-gradient(#ddd, #f5f5f5);
}
.muted {
    color: #b5b5b5;
}
output.muted {
    margin-left: 4px;
}
.dialog h3 {
    display: flex;
    align-items: center;
    height: 40px;
    padding: 4px 0 0 11px;
    gap: 11px;
    color: #333;
    font-weight: bold;
}
.dialog h3::before {
    content: "";
    border: 5px solid transparent;
    border-left: 6px solid #333;
    border-right: 0;
}
.dialog h3.open::before {
    margin-right: -4px;
    border: 5px solid transparent;
    border-top: 6px solid #333;
    border-bottom: 0;
}
.dialog-foot {
    position: relative;
    display: flex;
    align-items: center;
    height: 41px;
    padding: 0 12px 0 9px;
    gap: 12px;
    border-top: 1px solid #ccc;
    color: #777;
}
.dialog-foot > svg:first-child {
    margin-right: auto;
}
.dialog-foot button {
    width: 70px;
    height: 23px;
    border: 1px solid #c6c6c6;
    background: #e6e6e6;
}
.mark-ok {
    top: 1px;
    left: 118px;
}

/* Bottom of the canvas */
.navbar {
    display: flex;
    align-items: center;
    justify-content: space-between;
    justify-self: center;
    width: 274px;
    height: 28px;
    padding: 0 5px 0 4px;
    background: #f0f0f0;
}
.navbar .caret::after {
    margin-left: 3px;
    border-width: 5px 3px 0;
}
.navbar .spaced::after {
    margin-left: 7px;
}
.doc-state {
    align-self: center;
    justify-self: end;
    margin-right: 17px;
    color: #333;
}

/* Timeline */
.timeline {
    display: flex;
    align-items: center;
    height: 58px;
    padding: 0 16px 0 11px;
    border-top: 1px solid #ddd;
    border-bottom: 2px solid #444;
    background: #f0f0f0;
}
.playback {
    display: flex;
    gap: 13px;
}
.playback svg {
    width: 16px;
    height: 16px;
    fill: #555;
}
.features {
    display: flex;
    margin: 9px 0 0 21px;
}
.features button {
    position: relative;
    width: 28px;
    height: 37px;
    padding-bottom: 10px;
}
.features svg {
    width: 20px;
    height: 20px;
}
/* Track under the features, with a tick below each one */
.features button::after {
    content: "";
    position: absolute;
    right: -14px;
    bottom: 2px;
    width: 28px;
    height: 7px;
    border: solid #c8c8c8;
    border-width: 0 0 2px 2px;
}
.features button:last-child::after {
    width: 2px;
    right: 12px;
}
.playhead {
    margin-left: -8px;
}
.settings {
    margin-left: auto;
    color: #777;
}
```
